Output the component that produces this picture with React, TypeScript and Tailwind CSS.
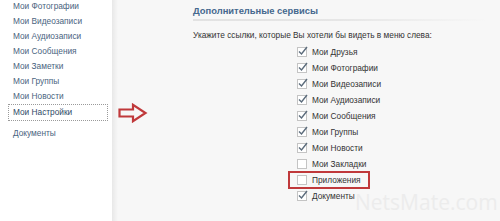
import React from 'react';

const menu = ['Мои Фотографии', 'Мои Видеозаписи', 'Мои Аудиозаписи', 'Мои Сообщения', 'Мои Заметки', 'Мои Группы', 'Мои Новости'];

const services: { label: string; checked: boolean; marked?: boolean }[] = [
  { label: 'Мои Друзья', checked: true },
  { label: 'Мои Фотографии', checked: true },
  { label: 'Мои Видеозаписи', checked: true },
  { label: 'Мои Аудиозаписи', checked: true },
  { label: 'Мои Сообщения', checked: true },
  { label: 'Мои Группы', checked: true },
  { label: 'Мои Новости', checked: true },
  { label: 'Мои Закладки', checked: false },
  { label: 'Приложения', checked: false, marked: true },
  { label: 'Документы', checked: true },
];

const Check = ({ checked }: { checked: boolean }) => (
  <span className="relative w-[10px] h-[10px] border border-[#c4c4c4] bg-white shrink-0">
    {checked && (
      <svg className="absolute -left-[1px] -top-[3px]" width="12" height="12" viewBox="0 0 12 12">
        <path d="M2 6.5 L4.5 9 L10 2" fill="none" stroke="#5b6b7b" strokeWidth="1.4" />
      </svg>
    )}
  </span>
);

const App: React.FC = () => {
  return (
    <div className="w-[500px] h-[221px] flex bg-[#f7f7f7] overflow-hidden relative" style={{ fontFamily: '"Liberation Sans", Arial, sans-serif' }}>
      <div className="w-[112px] bg-white h-full text-[8.3px] text-[#4a6480]">
        <div className="flex flex-col">
          {menu.map(m => (
            <div key={m} className="h-[15px] pl-[13px] leading-[13px]">{m}</div>
          ))}
        </div>
        <div className="ml-[8px] -mt-[1px] w-[100px] h-[17px] border border-dotted border-[#9a9a9a] pl-[4px] leading-[15px] text-[#2f4a66]">Мои Настройки</div>
        <div className="pl-[13px] mt-[6px] leading-[13px]">Документы</div>
      </div>
      <div className="w-[6px] h-full bg-gradient-to-r from-[#e8e8e8] to-[#f7f7f7]" />
      <div className="w-[30px] pt-[103px] flex justify-center">
        <svg width="30" height="20" viewBox="0 0 30 20">
          <path d="M1.5 6.5 H15 V1.8 L27.5 10 L15 18.2 V13.5 H1.5 Z" fill="none" stroke="#c0393b" strokeWidth="2.2" strokeLinejoin="miter" />
        </svg>
      </div>
      <div className="absolute left-[193px] top-0 w-[295px]">
        <div className="pt-[4px] text-[9.4px] font-bold text-[#45688e] leading-[14px]">Дополнительные сервисы</div>
        <div className="mt-[1px] h-[2px] bg-gradient-to-r from-[#e2e2e2] via-[#e6e6e6] to-[#f7f7f7]" />
        <div className="mt-[8px] text-[8.3px] text-[#333] leading-[12px]">Укажите ссылки, которые Вы хотели бы видеть в меню слева:</div>
        <div className="mt-[3px] ml-[104px] flex flex-col text-[8.3px] text-[#333]">
          {services.map(s => (
            <div key={s.label} className="h-[16px] flex items-center gap-[5px] relative">
              {s.marked && <div className="absolute -left-[9px] -top-[1px] w-[82px] h-[18px] border-2 border-[#c0393b]" />}
              <Check checked={s.checked} />
              <span className="leading-[12px]">{s.label}</span>
            </div>
          ))}
        </div>
      </div>
      <div className="absolute left-[355px] top-[192px] text-[21px] text-[#ececec] leading-none" style={{ fontFamily: '"Open Sans", sans-serif' }}>NetsMate.com</div>
    </div>
  );
};

export default App;
